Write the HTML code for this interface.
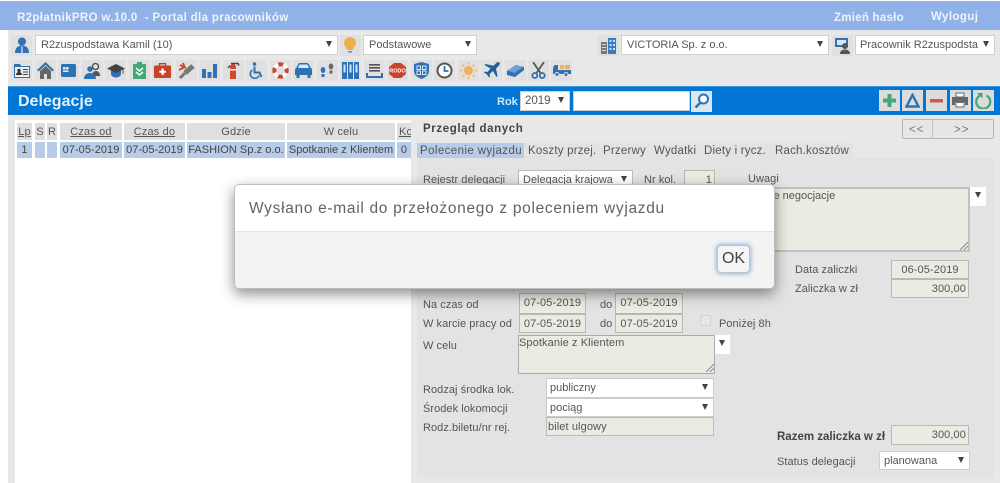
<!DOCTYPE html>
<html lang="pl"><head><meta charset="utf-8"><title>R2płatnikPRO</title>
<style>
html,body{margin:0;padding:0;background:#fff}
#p{position:relative;width:1000px;height:483px;overflow:hidden;background:#fff;font:11.5px "Liberation Sans","DejaVu Sans",sans-serif;color:#444}
#p div,#p svg{position:absolute}
.t{white-space:nowrap;line-height:14px}
.b{font-weight:bold}
.w{color:#eef3fb;font-weight:bold}
.sel,.box{background:#fff;border:1px solid #cfcfcf;box-sizing:border-box;white-space:nowrap;line-height:18px;padding-left:5px;color:#555;font-size:11px}
.sel:after{content:"";position:absolute;right:5px;top:5px;border-left:3px solid transparent;border-right:3px solid transparent;border-top:6px solid #444}
.inp{background:#ebebe3;border:1px solid #b9b9b0;box-sizing:border-box;white-space:nowrap;line-height:18px;color:#555;text-align:center;font-size:11px;letter-spacing:.1px}
.r{text-align:right;padding-right:2px}
.tile{width:21px;height:21px;background:#e0e0e0;top:60px}
.th{background:#dfdfdf;height:17px;top:123px;line-height:18px;text-align:center;color:#555;white-space:nowrap;overflow:hidden;font-size:11px;letter-spacing:.15px}
.u{text-decoration:underline}
.td{background:#b7cce8;height:16px;top:142px;line-height:16px;text-align:center;color:#444;white-space:nowrap;overflow:hidden;font-size:11px;letter-spacing:.05px}
.tb{width:21px;height:21px;background:#dcdcdc;top:90px}
.lab{color:#555;font-size:11px;letter-spacing:.05px}
.tab{color:#555;letter-spacing:.2px}
</style></head><body><div id="p">

<div style="left:0;top:1px;width:1000px;height:29px;background:#91b2e8"></div>
<div style="left:8px;top:30px;width:992px;height:453px;background:#e8e8e8"></div>
<div class="t w" style="left:17px;top:11px;letter-spacing:.35px">R2płatnikPRO w.10.0 &nbsp;- Portal dla pracowników</div>
<div class="t w" style="left:834px;top:11px;letter-spacing:.25px">Zmień hasło</div>
<div class="t w" style="left:931px;top:10px;letter-spacing:.4px">Wyloguj</div>

<!-- top selects -->
<div class="tile" style="left:11px;top:35px"></div>
<svg style="left:14px;top:37px" width="16" height="17" viewBox="0 0 16 17"><circle cx="8" cy="4.500" r="4" fill="#2f71b5"/><path d="M1 16c0-5 3-7.500 7-7.500s7 2.500 7 7.500z" fill="#2f71b5"/><path d="M7.300 9.500h1.400V16H7.300z" fill="#dde"/></svg>
<div class="sel" style="left:35px;top:35px;width:303px;height:20px">R2zuspodstawa Kamil (10)</div>
<div class="tile" style="left:340px;top:35px"></div>
<svg style="left:343px;top:37px" width="14" height="17" viewBox="0 0 14 17"><path d="M7 0a6 6 0 0 1 6 6c0 3-2.500 4-3 7H4C3.500 10 1 9 1 6a6 6 0 0 1 6-6z" fill="#eeb04f"/><path d="M5 14h4v1.500H5z" fill="#888"/></svg>
<div class="sel" style="left:363px;top:35px;width:114px;height:20px">Podstawowe</div>
<div class="tile" style="left:598px;top:35px"></div>
<svg style="left:600px;top:37px" width="17" height="17" viewBox="0 0 17 17"><path d="M1 5h6v12H1z" fill="#777"/><path d="M8 1h8v16H8z" fill="#3b7cc0"/><path d="M2 7h4v1H2zM2 10h4v1H2zM2 13h4v1H2z" fill="#ddd"/><path d="M9.500 3h2v2h-2zM13 3h2v2h-2zM9.500 7h2v2h-2zM13 7h2v2h-2zM9.500 11h2v2h-2zM13 11h2v2h-2z" fill="#cfe0f2"/></svg>
<div class="sel" style="left:621px;top:35px;width:208px;height:20px">VICTORIA Sp. z o.o.</div>
<div class="tile" style="left:832px;top:35px"></div>
<svg style="left:834px;top:37px" width="17" height="17" viewBox="0 0 17 17"><path d="M1 1h13v9H1z" fill="#2f71b5"/><path d="M3 3h9v5H3z" fill="#dbe6f2"/><circle cx="11" cy="9" r="3" fill="#555"/><path d="M6 17c0-3 2-4.500 5-4.500s5 1.500 5 4.500z" fill="#555"/></svg>
<div class="sel" style="left:855px;top:35px;width:140px;height:20px;padding-left:4px">Pracownik R2zuspodsta</div>

<!-- icon toolbar -->
<div class="tile" style="left:11px"></div><div class="tile" style="left:35px"></div><div class="tile" style="left:58px"></div><div class="tile" style="left:82px"></div><div class="tile" style="left:105px"></div><div class="tile" style="left:129px"></div><div class="tile" style="left:152px"></div><div class="tile" style="left:176px"></div><div class="tile" style="left:199px"></div><div class="tile" style="left:223px"></div><div class="tile" style="left:246px"></div><div class="tile" style="left:270px"></div><div class="tile" style="left:293px"></div><div class="tile" style="left:317px"></div><div class="tile" style="left:340px"></div><div class="tile" style="left:364px"></div><div class="tile" style="left:387px"></div><div class="tile" style="left:411px"></div><div class="tile" style="left:434px"></div><div class="tile" style="left:458px"></div><div class="tile" style="left:481px"></div><div class="tile" style="left:505px"></div><div class="tile" style="left:528px"></div><div class="tile" style="left:551px"></div>

<svg style="left:14px;top:63px" width="16" height="15" viewBox="0 0 16 15"><path d="M0 1h6l1 2h9v12H0z" fill="#2f71b5"/><path d="M1 4h14v10H1z" fill="#eee"/><circle cx="5" cy="7.500" r="1.700" fill="#333"/><path d="M2 12c0-2 1.500-3 3-3s3 1 3 3z" fill="#333"/><path d="M9 6h5v1H9zM9 8.500h5v1H9zM9 11h5v1H9z" fill="#444"/></svg>
<svg style="left:37px;top:62px" width="17" height="17" viewBox="0 0 17 17"><path d="M0 8L8.500 0 17 8l-1.500 1.500-7-6.500-7 6.500z" fill="#2f71b5"/><path d="M3 9l5.500-5L14 9v8h-4v-5H7v5H3z" fill="#666"/></svg>
<svg style="left:61px;top:64px" width="15" height="13" viewBox="0 0 15 13"><rect width="15" height="13" rx="1.500" fill="#2f71b5"/><path d="M2 3h2.500v2.500H2zM5 3h2.500v2.500H5zM2 6.500h5.500V8H2z" fill="#e4eef8"/></svg>
<svg style="left:84px;top:62px" width="17" height="17" viewBox="0 0 17 17"><circle cx="11.500" cy="4.500" r="3" fill="none" stroke="#444" stroke-width="1.300"/><path d="M8 14c0-3 1.500-5 4-5s4 2 4 5z" fill="#555"/><circle cx="6" cy="7" r="2.800" fill="#2f71b5"/><path d="M0 17c0-4 2.500-6 6-6s6 2 6 6z" fill="#2f71b5"/></svg>
<svg style="left:107px;top:63px" width="18" height="15" viewBox="0 0 18 15"><path d="M4 7v4c0 2 2.500 3.500 5 3.500s5-1.500 5-3.500V7z" fill="#2f71b5"/><path d="M0 5.500L9 1l9 4.500L9 10z" fill="#444"/><path d="M16 6v5" stroke="#555"/></svg>
<svg style="left:133px;top:62px" width="13" height="17" viewBox="0 0 13 17"><path d="M0 2h4V0h5v2h4v15H0z" fill="#45a777"/><path d="M3 6l3.500 3L10 6M3 10l3.500 3L10 10" stroke="#eafff3" stroke-width="1.500" fill="none"/></svg>
<svg style="left:154px;top:63px" width="17" height="15" viewBox="0 0 17 15"><path d="M5.500 3V.7h6V3" fill="none" stroke="#b8412c" stroke-width="1.300"/><rect y="2.500" width="17" height="12.500" rx="1" fill="#c9432b"/><path d="M7.500 5.500h2.200v2.200h2.200v2H9.700v2.200H7.500V9.700H5.300v-2h2.200z" fill="#fff"/></svg>
<svg style="left:178px;top:62px" width="17" height="17" viewBox="0 0 17 17"><path d="M2 16l5-5" stroke="#777" stroke-width="3"/><path d="M7 11l8-7" stroke="#777" stroke-width="5"/><path d="M2 3l6 3M1 8l6-3M5 1l2 5" stroke="#d0472e" stroke-width="2"/></svg>
<svg style="left:202px;top:64px" width="15" height="14" viewBox="0 0 15 14"><path d="M0 5h4v9H0zM5.500 8h4v6h-4zM11 0h4v14h-4z" fill="#2f71b5"/></svg>
<svg style="left:227px;top:62px" width="13" height="17" viewBox="0 0 13 17"><path d="M3 5a3 3 0 0 1 6 0v12H3z" fill="#d0472e"/><path d="M3 7h6v1.500H3z" fill="#eee"/><path d="M3 3.500L1 6M4 1.500h7l1 2" stroke="#444" stroke-width="1.400" fill="none"/></svg>
<svg style="left:249px;top:62px" width="15" height="17" viewBox="0 0 15 17"><circle cx="5.500" cy="2" r="1.800" fill="#2f71b5"/><path d="M5.500 4.500v6h5l2 4.500" stroke="#2f71b5" stroke-width="2" fill="none"/><path d="M3.500 8a4.500 4.500 0 1 0 6.500 5.500" stroke="#2f71b5" stroke-width="1.600" fill="none"/></svg>
<svg style="left:272px;top:62px" width="17" height="17" viewBox="0 0 17 17"><circle cx="8.500" cy="8.500" r="6.200" fill="none" stroke="#fff" stroke-width="4"/><circle cx="8.500" cy="8.500" r="6.200" fill="none" stroke="#d0472e" stroke-width="4" stroke-dasharray="4.900 4.840" stroke-dashoffset="2.400"/></svg>
<svg style="left:295px;top:63px" width="17" height="15" viewBox="0 0 17 15"><path d="M0 12V7c0-1.500 1-2 1.500-2.500L3 1.500C3.500.5 4 0 5 0h7c1 0 1.500.5 2 1.500l1.500 3C16 5 17 5.500 17 7v5h-1.500v3h-3v-3h-8v3h-3v-3z" fill="#2f71b5"/><path d="M3 5l1.500-3.500h8L14 5z" fill="#dce8f4"/></svg>
<svg style="left:319px;top:63px" width="16" height="15" viewBox="0 0 16 15"><ellipse cx="4" cy="7" rx="2.300" ry="3" fill="#2f71b5"/><path d="M2.500 11h3v3h-3z" fill="#2f71b5"/><ellipse cx="12" cy="3.500" rx="2.300" ry="3" fill="#666"/><path d="M10.500 7.500h3v3h-3z" fill="#666"/></svg>
<svg style="left:342px;top:62px" width="17" height="17" viewBox="0 0 17 17"><path d="M0 0h5v17H0zM6 0h5v17H6zM12 0h5v17h-5z" fill="#2f71b5"/><path d="M1.500 2.500h2v8h-2zM7.500 2.500h2v8h-2zM13.500 2.500h2v8h-2z" fill="#d8e6f4"/></svg>
<svg style="left:366px;top:63px" width="17" height="15" viewBox="0 0 17 15"><path d="M3 1h11v1.600H3zM3 4h11v1.600H3zM3 7h11v1.600H3z" fill="#555"/><path d="M0 10h2v3h13v-3h2v5H0z" fill="#2f71b5"/></svg>
<svg style="left:389px;top:63px" width="17" height="15" viewBox="0 0 17 15"><path d="M5 0h7l5 4v7l-5 4H5l-5-4V4z" fill="#c9432b"/><text x="8.500" y="9.500" text-anchor="middle" font-size="5.500" font-weight="bold" fill="#fff" font-family="Liberation Sans">RODO</text></svg>
<svg style="left:414px;top:62px" width="15" height="17" viewBox="0 0 15 17"><path d="M0 2l7.500-2L15 2v7c0 4-3.500 6.500-7.500 8C3.500 15.500 0 13 0 9z" fill="#2f71b5"/><path d="M3 4h3.500v3.500H3zM8.500 4H12v3.500H8.500zM3 9h3.500v3.500H3zM8.500 9H12v3.500H8.500z" fill="none" stroke="#dce8f4"/></svg>
<svg style="left:436px;top:62px" width="17" height="17" viewBox="0 0 17 17"><circle cx="8.500" cy="8.500" r="7" fill="#fff" stroke="#555" stroke-width="2"/><path d="M8.500 4v5h4" fill="none" stroke="#2f71b5" stroke-width="1.800"/></svg>
<svg style="left:460px;top:62px" width="17" height="17" viewBox="0 0 17 17"><circle cx="8.500" cy="8.500" r="4.500" fill="#efb25c"/><path d="M8.500 0v2.500M8.500 14.500V17M0 8.500h2.500M14.500 8.500H17M2.500 2.500l1.800 1.800M12.700 12.700l1.800 1.800M14.500 2.500l-1.800 1.800M4.300 12.700l-1.800 1.800" stroke="#efb25c" stroke-width="1.300"/></svg>
<svg style="left:483px;top:62px" width="17" height="17" viewBox="0 0 17 17"><path d="M16.500.5c-1-.8-2.500-.3-3.500.7l-2.500 2.500L2.500 2 1.500 3l6 3.500L4.500 10l-2.500-.5-1 1 3 2 2 3 1-1-.5-2.500 3.500-3 3.500 6 1-1L13 6.500l2.500-2.500c1-1 1.800-2.700 1-3.500z" fill="#21609f"/></svg>
<svg style="left:507px;top:63px" width="17" height="15" viewBox="0 0 17 15"><path d="M0 8l9-6 8 2v3l-9 7-8-2z" fill="#2f71b5"/><path d="M1 7.500L9.500 2l6.500 2-8.500 6z" fill="#6ea2d6"/></svg>
<svg style="left:531px;top:62px" width="15" height="17" viewBox="0 0 15 17"><path d="M2 0l7.500 11M13 0L5.500 11" stroke="#555" stroke-width="1.800"/><circle cx="3.800" cy="13.500" r="2.500" fill="none" stroke="#2f71b5" stroke-width="1.800"/><circle cx="11.200" cy="13.500" r="2.500" fill="none" stroke="#2f71b5" stroke-width="1.800"/></svg>
<svg style="left:553px;top:64px" width="18" height="13" viewBox="0 0 18 13"><path d="M7 1h4v4H7zM12 1h5v4h-5z" fill="#efb25c"/><path d="M0 6c0-3 1-5 2-5h3v5h13v4H0z" fill="#2f71b5"/><circle cx="4" cy="10.500" r="2" fill="#2f71b5" stroke="#e0e0e0"/><circle cx="13" cy="10.500" r="2" fill="#2f71b5" stroke="#e0e0e0"/></svg>

<!-- blue bar -->
<div style="left:8px;top:86px;width:992px;height:29px;background:#0176d4;border-top:1px solid #3f97dc;box-sizing:border-box"></div>
<div class="t" style="left:18px;top:94px;font-size:16px;font-weight:bold;color:#e4f0fb;line-height:16px">Delegacje</div>
<div class="t" style="left:497px;top:95px;color:#d4e7f8;font-weight:bold;font-size:11px">Rok</div>
<div class="sel" style="left:520px;top:91px;width:50px;height:20px;padding-left:4px;font-size:11.5px">2019</div>
<div class="box" style="left:573px;top:91px;width:117px;height:20px"></div>
<div class="tb" style="left:691px;top:91px;background:#dbe6ef"></div>
<svg style="left:694px;top:93px" width="16" height="16" viewBox="0 0 16 16"><circle cx="9.500" cy="6" r="4.500" fill="#fff" stroke="#2f71b5" stroke-width="2"/><path d="M6.500 9.500L1.500 14.500" stroke="#2f71b5" stroke-width="2.500"/></svg>
<div class="tb" style="left:879px"></div><div class="tb" style="left:902px"></div><div class="tb" style="left:926px"></div><div class="tb" style="left:950px"></div><div class="tb" style="left:973px"></div>
<svg style="left:882px;top:93px" width="15" height="15" viewBox="0 0 15 15"><path d="M5.500 1h4v4.500H14v4H9.500V14h-4V9.500H1v-4h4.500z" fill="#45a777"/></svg>
<svg style="left:905px;top:93px" width="15" height="15" viewBox="0 0 15 15"><path d="M7.500 2L13.500 13.500H1.500z" fill="none" stroke="#2f71b5" stroke-width="2.400"/></svg>
<svg style="left:929px;top:93px" width="15" height="15" viewBox="0 0 15 15"><path d="M1 6h13v3.500H1z" fill="#cf5a3d"/></svg>
<svg style="left:952px;top:92px" width="16" height="16" viewBox="0 0 16 16"><path d="M4 1h8v4H4z" fill="#fff" stroke="#666"/><path d="M0 5h16v8h-3v-3H3v3H0z" fill="#666"/><path d="M4 10.500h8V15H4z" fill="#fff" stroke="#666"/></svg>
<svg style="left:975px;top:91px" width="17" height="18" viewBox="0 0 17 18"><path d="M11.500 4.500a7 7 0 1 1-6.500 0" fill="none" stroke="#45a777" stroke-width="2.200"/><path d="M2 2h5.500v5.500z" fill="#45a777"/></svg>

<!-- left table panel -->
<div style="left:15px;top:120px;width:396px;height:363px;background:#fff"></div>
<div class="th" style="left:17px;width:15px"><span class="u">Lp</span></div>
<div class="th" style="left:35px;width:10px">S</div>
<div class="th" style="left:47px;width:10px">R</div>
<div class="th" style="left:60px;width:62px"><span class="u">Czas od</span></div>
<div class="th" style="left:124px;width:61px"><span class="u">Czas do</span></div>
<div class="th" style="left:187px;width:98px">Gdzie</div>
<div class="th" style="left:287px;width:108px">W celu</div>
<div class="th" style="left:397px;width:14px;text-align:left;padding-left:2px;box-sizing:border-box"><span class="u">Ko</span></div>
<div class="td" style="left:17px;width:15px">1</div>
<div class="td" style="left:35px;width:10px"></div>
<div class="td" style="left:47px;width:10px"></div>
<div class="td" style="left:60px;width:62px">07-05-2019</div>
<div class="td" style="left:124px;width:61px">07-05-2019</div>
<div class="td" style="left:187px;width:98px">FASHION Sp.z o.o.</div>
<div class="td" style="left:287px;width:108px">Spotkanie z Klientem</div>
<div class="td" style="left:397px;width:14px">0</div>

<!-- right panel -->
<div class="t b" style="left:423px;top:122px;color:#444;letter-spacing:.6px">Przegląd danych</div>
<div style="left:902px;top:119px;width:92px;height:20px;border:1px solid #b5b5b5;box-sizing:border-box;background:#e6e6e6;border-radius:2px"></div>
<div style="left:932px;top:120px;width:1px;height:18px;background:#c4c4c4"></div>
<div class="t" style="left:909px;top:123px;color:#777;letter-spacing:1px">&lt;&lt;</div>
<div class="t" style="left:954px;top:123px;color:#777;letter-spacing:1px">&gt;&gt;</div>

<div style="left:417px;top:143px;width:436px;height:15px;background:#e3e3e3"></div>
<div style="left:417px;top:143px;width:107px;height:15px;background:#b7cce8"></div>
<div class="t tab" style="left:420px;top:144px;letter-spacing:.4px">Polecenie wyjazdu</div>
<div class="t tab" style="left:528px;top:144px">Koszty przej.</div>
<div class="t tab" style="left:603px;top:144px">Przerwy</div>
<div class="t tab" style="left:654px;top:144px">Wydatki</div>
<div class="t tab" style="left:704px;top:144px">Diety i rycz.</div>
<div class="t tab" style="left:775px;top:144px">Rach.kosztów</div>

<div style="left:417px;top:158px;width:577px;height:319px;background:#e3e3e3"></div>

<div class="t lab" style="left:423px;top:173px">Rejestr delegacji</div>
<div class="sel" style="left:518px;top:170px;width:115px;height:21px;border-color:#bbb;padding-left:4px">Delegacja krajowa</div>
<div class="t lab" style="left:644px;top:173px">Nr kol.</div>
<div class="inp r" style="left:684px;top:170px;width:31px;height:21px">1</div>
<div class="t lab" style="left:748px;top:172px">Uwagi</div>
<div class="inp" style="left:700px;top:187px;width:270px;height:65px;text-align:left;padding-left:69px;border:2px solid #c2c2ba;line-height:14px;letter-spacing:0">ie negocjacje</div>
<div class="sel" style="left:970px;top:187px;width:16px;height:19px;border:0;padding:0"></div>
<svg style="left:960px;top:242px" width="8" height="8" viewBox="0 0 8 8"><path d="M0 8L8 0M4 8L8 4" stroke="#888"/></svg>

<div class="t lab" style="left:795px;top:263px">Data zaliczki</div>
<div class="inp" style="left:891px;top:260px;width:78px;height:19px">06-05-2019</div>
<div class="t lab" style="left:795px;top:282px">Zaliczka w zł</div>
<div class="inp r" style="left:891px;top:279px;width:78px;height:19px">300,00</div>

<div class="t lab" style="left:423px;top:298px">Na czas od</div>
<div class="inp" style="left:519px;top:293px;width:67px;height:21px">07-05-2019</div>
<div class="t lab" style="left:600px;top:298px">do</div>
<div class="inp" style="left:615px;top:293px;width:68px;height:21px">07-05-2019</div>
<div class="t lab" style="left:423px;top:317px">W karcie pracy od</div>
<div class="inp" style="left:519px;top:314px;width:67px;height:19px">07-05-2019</div>
<div class="t lab" style="left:600px;top:317px">do</div>
<div class="inp" style="left:615px;top:314px;width:68px;height:19px">07-05-2019</div>
<div style="left:700px;top:315px;width:11px;height:11px;border:1px solid #d0d0d0;background:#e6e6e6;box-sizing:border-box;border-radius:2px"></div>
<div class="t lab" style="left:719px;top:317px">Poniżej 8h</div>

<div class="t lab" style="left:423px;top:339px">W celu</div>
<div class="inp" style="left:518px;top:335px;width:197px;height:39px;text-align:left;line-height:14px;padding-left:0;border-width:1px;border-color:#aaa">Spotkanie z Klientem</div>
<div class="sel" style="left:715px;top:335px;width:15px;height:19px;border:0;padding:0"></div>
<svg style="left:706px;top:364px" width="8" height="8" viewBox="0 0 8 8"><path d="M0 8L8 0M4 8L8 4" stroke="#888"/></svg>

<div class="t lab" style="left:423px;top:383px">Rodzaj środka lok.</div>
<div class="sel" style="left:546px;top:378px;width:168px;height:20px;border:1px solid #ccc;padding-left:3px">publiczny</div>
<div class="t lab" style="left:423px;top:402px">Środek lokomocji</div>
<div class="sel" style="left:546px;top:398px;width:168px;height:19px;border:1px solid #ccc;padding-left:3px">pociąg</div>
<div class="t lab" style="left:423px;top:421px">Rodz.biletu/nr rej.</div>
<div class="inp" style="left:546px;top:417px;width:168px;height:19px;text-align:left;padding-left:1px;border-color:#bbb">bilet ulgowy</div>

<div class="t b" style="left:777px;top:430px;color:#444;font-size:11.500px">Razem zaliczka w zł</div>
<div class="inp r" style="left:891px;top:425px;width:78px;height:20px">300,00</div>
<div class="t lab" style="left:777px;top:455px">Status delegacji</div>
<div class="sel" style="left:879px;top:451px;width:91px;height:19px;padding-left:4px">planowana</div>

<!-- dialog -->
<div style="left:234px;top:184px;width:541px;height:105px;background:#f3f3f3;border:1px solid #bdbdbd;box-sizing:border-box;border-radius:5px;box-shadow:0 5px 14px rgba(0,0,0,.45);overflow:hidden">
  <div style="left:0;top:0;width:100%;height:46px;background:#fff;border-bottom:1px solid #e4e4e4"></div>
  <div class="t" style="left:14px;top:14px;font-size:15.500px;line-height:20px;color:#5f6468;letter-spacing:.69px">Wysłano e-mail do przełożonego z poleceniem wyjazdu</div>
  <div style="left:482px;top:60px;width:33px;height:28px;box-sizing:border-box;border:1px solid #c2c2c2;background:#f5f5f5;border-radius:4px;box-shadow:0 0 4px 1px #8db4e2;text-align:center;line-height:26px;font-size:16px;color:#444">OK</div>
</div>
</div></body></html>
